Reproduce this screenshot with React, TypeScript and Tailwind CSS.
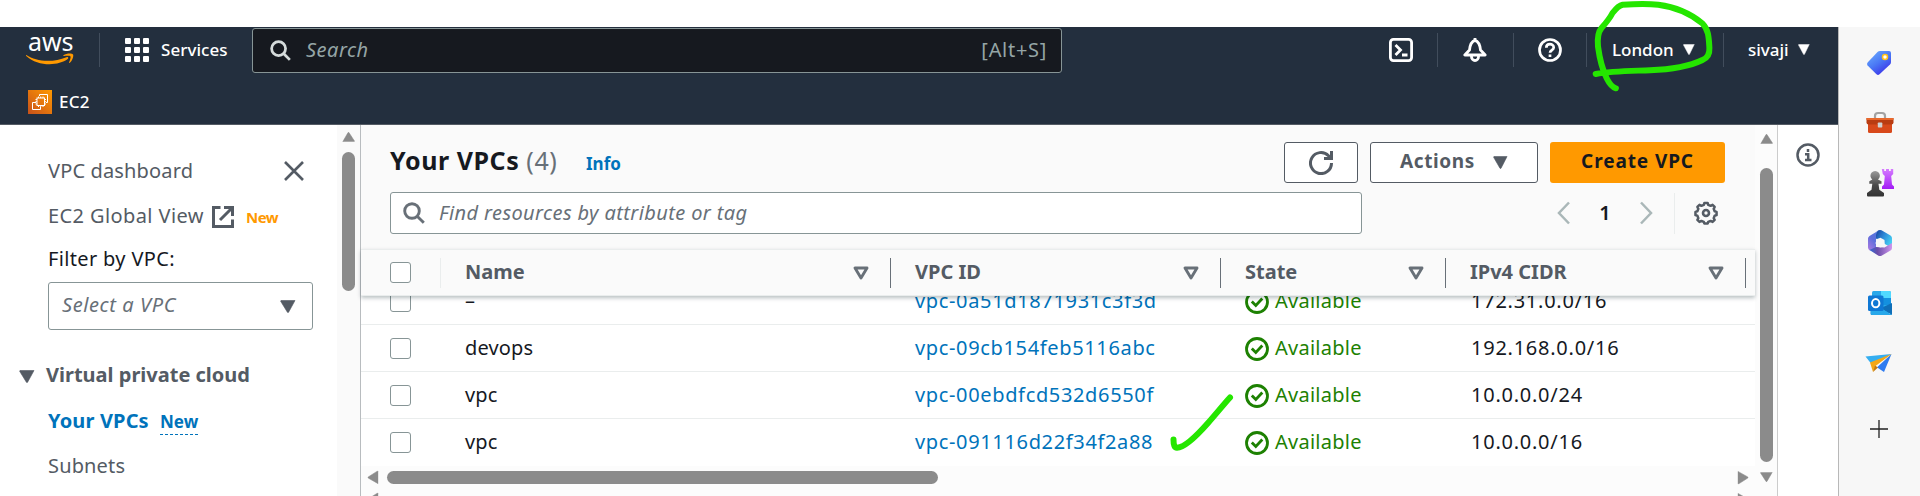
import type { ReactNode } from "react";

type Vpc = { name: string; id: string; cidr: string };

const vpcs: Vpc[] = [
  { name: "–", id: "vpc-0a51d1871931c3f3d", cidr: "172.31.0.0/16" },
  { name: "devops", id: "vpc-09cb154feb5116abc", cidr: "192.168.0.0/16" },
  { name: "vpc", id: "vpc-00ebdfcd532d6550f", cidr: "10.0.0.0/24" },
  { name: "vpc", id: "vpc-091116d22f34f2a88", cidr: "10.0.0.0/16" },
];

const columns = "grid grid-cols-[80px_450px_330px_225px_300px_1fr]";

function Caret({ className }: { className: string }) {
  return (
    <svg viewBox="0 0 16 13" className={className} preserveAspectRatio="none">
      <path d="M1 .5h14L8.600 12.200q-.6.900-1.200 0L.5 1z" fill="currentColor" stroke="currentColor" strokeWidth=".6" strokeLinejoin="round" />
    </svg>
  );
}

function SortCaret() {
  return (
    <svg viewBox="0 0 16 14" className="h-[14px] w-4 shrink-0 text-[#687078]">
      <path d="M2 2h12L8 12z" fill="none" stroke="currentColor" strokeWidth="2.900" strokeLinejoin="round" />
    </svg>
  );
}

function SearchIcon({ className }: { className: string }) {
  return (
    <svg viewBox="0 0 22 22" className={className} fill="none" stroke="currentColor" strokeWidth="2.900">
      <circle cx="9" cy="9" r="7.300" />
      <path d="M14.200 14.200 20.800 20.800" />
    </svg>
  );
}

function Checkbox() {
  return <span className="block h-[21px] w-[21px] rounded-[3px] border border-[#879596] bg-white" />;
}

function Divider({ className = "" }: { className?: string }) {
  return <span className={`block h-[34px] w-px shrink-0 bg-[#414d5c] ${className}`} />;
}

function TopBar() {
  return (
    <header className="h-[98px] border-b border-[#545b64] bg-[#232f3e] text-white">
      <div className="flex h-[47px] items-center pb-0.5">
        <div className="ml-[26px] flex h-[30px] w-12 flex-col">
          <span className="h-[18px] pl-[2px] text-[25px] leading-[13px] tracking-[-0.1px]">aws</span>
          <svg viewBox="0 0 48 12" className="h-3 w-12 shrink-0">
            <path d="M.3 2C10 8.800 27 9.800 40.500 4.200c1.500-.6 2.400.8 1.200 1.800C32 13.200 12 13.600.2 2.900c-.5-.5-.2-1.200.1-.9z" fill="#ff9900" />
            <path d="M37.500 2.200c3-2 8.300-2 9.500-.8 1 1.200-.8 6.400-3.200 8.400-.5.400-1 .1-.7-.5.8-1.900 1.900-4.700 1.400-5.800-.6-.9-4.200-.7-6.500-.4-.7.100-1-.5-.5-.9z" fill="#ff9900" />
          </svg>
        </div>
        <Divider className="ml-[25px]" />
        <svg viewBox="0 0 24 24" className="ml-[25px] h-6 w-6 shrink-0" fill="currentColor">
          {[0, 9, 18].map((y) => [0, 9, 18].map((x) => <rect key={`${x}-${y}`} x={x} y={y} width="6" height="6" rx="1" />))}
        </svg>
        <span className="ml-3 w-[91px] shrink-0 text-[17px] font-medium tracking-[0.05px] whitespace-nowrap">Services</span>
        <div className="mt-0.5 flex h-[45px] w-[810px] shrink-0 items-center rounded-[3px] border border-[#879596] bg-[#16191f] pr-[14px] pl-[17px] text-[20px] text-[#95a5a6]">
          <SearchIcon className="h-[21px] w-[21px] text-[#d5dbdb]" />
          <span className="ml-[15px] flex-1 pb-0.5 tracking-[0.5px] italic">Search</span>
          <span className="pb-0.5 tracking-[0.7px]">[Alt+S]</span>
        </div>
        <svg viewBox="0 0 24 24" className="ml-[327px] h-6 w-6 shrink-0" fill="none" stroke="currentColor" strokeWidth="2.800">
          <rect x="1.400" y="1.400" width="21.200" height="21.200" rx="3" />
          <path d="m6.500 7 5 5-5 5M13 17h5.500" />
        </svg>
        <Divider className="ml-6" />
        <svg viewBox="0 0 24 24" className="ml-[25px] h-6 w-6 shrink-0" fill="none" stroke="currentColor" strokeWidth="2.800" strokeLinejoin="round">
          <path d="M1.800 17h20.400L17.500 12C17 6.500 15 3.200 12 2.300 9 3.200 7 6.500 6.500 12z" />
          <path d="M8.500 17.500v1.200a3.500 3.800 0 0 0 7 0v-1.200M12 0v2.500" />
        </svg>
        <Divider className="ml-[26px]" />
        <svg viewBox="0 0 24 24" className="ml-6 h-6 w-6 shrink-0" fill="none" stroke="currentColor" strokeWidth="2.700">
          <circle cx="12" cy="12" r="10.500" />
          <path d="M8.300 9.700C8.300 5 15.700 5.200 15.700 9.400c0 2.700-3.700 2.600-3.700 5.400M12 16.500v2.600" />
        </svg>
        <Divider className="ml-6" />
        <span className="ml-[25px] w-[71px] shrink-0 text-[17px] font-medium whitespace-nowrap">London</span>
        <Caret className="h-[11px] w-3 shrink-0" />
        <Divider className="ml-[28px]" />
        <span className="ml-6 w-[50px] shrink-0 text-[17px] font-medium whitespace-nowrap">sivaji</span>
        <Caret className="h-[11px] w-3 shrink-0" />
      </div>
      <div className="flex h-[50px] items-center gap-2 pt-[6px] pl-7">
        <svg viewBox="0 0 24 24" className="h-6 w-6">
          <defs>
            <linearGradient id="ec2" x1="0" y1="1" x2="1" y2="0">
              <stop offset="0" stopColor="#c8511b" />
              <stop offset="1" stopColor="#ff9900" />
            </linearGradient>
          </defs>
          <rect width="24" height="24" fill="url(#ec2)" />
          <g fill="none" stroke="#fff" strokeWidth="1">
            <rect x="9" y="8" width="7.500" height="7.500" />
            <path d="M10.500 6.500V8m2.200-1.500V8M15 6.500V8m-4.500 7.500V17m2.200-1.500V17m2.300-1.500V17M7.500 9.500H9m-1.500 2.200H9M7.500 14H9m7.500-4.500H18m-1.500 2.200H18M16.500 14H18" />
            <path d="M11.500 6V4.500h8v8H18M8 12.500H4.500v7h8V17" />
          </g>
        </svg>
        <span className="-ml-px text-[17px] font-medium tracking-[0.2px]">EC2</span>
      </div>
    </header>
  );
}

function SideNav() {
  return (
    <nav className="flex w-[360px] shrink-0 text-[20px] leading-7 text-[#545b64]">
      <div className="w-[337px] pt-8 whitespace-nowrap">
        <div className="flex h-[28px] items-center justify-between pr-[33px] pl-12">
          <span className="tracking-[0.15px]">VPC dashboard</span>
          <svg viewBox="0 0 20 20" className="h-5 w-5" stroke="currentColor" strokeWidth="2.600">
            <path d="m1 1 18 18M19 1 1 19" />
          </svg>
        </div>
        <div className="mt-[17px] flex h-7 items-center pl-12">
          <span className="w-[164px] tracking-[0.4px]">EC2 Global View</span>
          <svg viewBox="0 0 22 22" className="mt-0.5 h-[22px] w-[22px]" fill="none" stroke="currentColor" strokeWidth="3">
            <path d="M8.500 1.500h-7v19h19v-7M12 1.500h8.500V10M20 2 8 14" />
          </svg>
          <span className="mt-0.5 ml-3 text-[15px] font-bold tracking-[-0.5px] text-[#ff9900]">New</span>
        </div>
        <div className="mt-[15px] h-7 pl-12 tracking-[0.35px] text-[#16191f]">Filter by VPC:</div>
        <div className="mt-[9px] ml-12 flex h-12 w-[265px] items-center justify-between rounded-[3px] border border-[#879596] bg-white pr-4 pl-[13px]">
          <span className="pb-0.5 tracking-[0.6px] text-[#687078] italic">Select a VPC</span>
          <Caret className="h-[13px] w-4" />
        </div>
        <div className="mt-[31px] flex h-7 items-center gap-3 pl-[19px] font-bold">
          <Caret className="mt-0.5 h-[13px] w-4" />
          <span className="-ml-px">Virtual private cloud</span>
        </div>
        <div className="mt-[18px] flex h-7 items-center pl-12 font-bold text-[#0073bb]">
          <span className="w-[112px] tracking-[0.15px]">Your VPCs</span>
          <span className="mt-px border-b border-dashed border-[#0073bb] text-[17px] leading-[25px]">New</span>
        </div>
        <div className="mt-[17px] h-7 pl-12 tracking-[0.15px]">Subnets</div>
      </div>
      <div className="flex w-[23px] flex-col bg-[#fafafa] pt-[7px] pl-[5px] text-[#8b8b8b]">
        <Caret className="h-[10px] w-[13px] rotate-180" />
        <span className="mt-[10px] h-[139px] w-[13px] rounded-full bg-[#8b8b8b]" />
      </div>
    </nav>
  );
}

function Button({ className, children }: { className: string; children: ReactNode }) {
  return (
    <button className={`flex h-[41px] shrink-0 items-center justify-center rounded-[3px] text-[19px] font-bold whitespace-nowrap ${className}`}>
      {children}
    </button>
  );
}

function HeaderCell({ label, pad }: { label: string; pad: string }) {
  return (
    <div className={`flex h-[30px] items-center justify-between border-r border-[#687078] ${pad}`}>
      <span className="pb-0.5">{label}</span>
      <SortCaret />
    </div>
  );
}

function VpcTable() {
  return (
    <section className="flex w-[1394px] shrink-0 flex-col bg-[#fafafa]">
      <div className="h-[124px] pl-[29px]">
        <div className="flex h-[67px] items-center pt-[8px]">
          <h1 className="w-[196px] shrink-0 pb-1 text-[25px] font-bold tracking-[0.55px] whitespace-nowrap text-[#16191f]">
            Your VPCs <span className="font-normal text-[#687078]">(4)</span>
          </h1>
          <span className="mt-0.5 w-[698px] shrink-0 text-[17px] font-bold text-[#0073bb]">Info</span>
          <Button className="w-[74px] border border-[#545b64] bg-white text-[#545b64]">
            <svg viewBox="0 0 24 24" className="h-6 w-6" fill="none" stroke="currentColor" strokeWidth="3">
              <path d="M22.500 12A10.500 10.500 0 1 1 19.500 4.700L22 7.500" />
              <path d="M22.500 0v7.500H15" />
            </svg>
          </Button>
          <Button className="ml-3 w-[168px] gap-[18px] border border-[#545b64] bg-white text-[#545b64]">
            <span className="pb-0.5 tracking-[0.6px]">Actions</span>
            <Caret className="h-[13px] w-[15px]" />
          </Button>
          <Button className="ml-3 w-[175px] bg-[#ff9900] text-[#16191f]">
            <span className="pb-0.5 tracking-[0.9px]">Create VPC</span>
          </Button>
        </div>
        <div className="flex h-[42px] items-center">
          <div className="flex h-[42px] w-[972px] shrink-0 items-center rounded-[3px] border border-[#879596] bg-white pl-3 text-[20px] text-[#687078] italic">
            <SearchIcon className="h-[22px] w-[22px]" />
            <span className="ml-[14px] tracking-[0.4px]">Find resources by attribute or tag</span>
          </div>
          <svg viewBox="0 0 13 24" className="ml-[195px] h-6 w-[13px] shrink-0" fill="none" stroke="#aab7b8" strokeWidth="2.500">
            <path d="M12 1.500 2 12l10 10.500" />
          </svg>
          <span className="w-[70px] shrink-0 text-center text-[20px] font-semibold text-[#16191f]">1</span>
          <svg viewBox="0 0 13 24" className="h-6 w-[13px] shrink-0" fill="none" stroke="#aab7b8" strokeWidth="2.500">
            <path d="m1 1.500 10 10.500L1 22.500" />
          </svg>
          <span className="ml-[21px] h-[41px] w-px shrink-0 bg-[#eaeded]" />
          <svg viewBox="0 0 24 24" className="ml-[19px] h-6 w-6 shrink-0" fill="none" stroke="#545b64" strokeWidth="2.600" strokeLinejoin="round">
            <path d="M10.300 1.500h3.400l.6 2 2.500 1 2-1 2.200 2.200-1 2 1 2.500 2 .6v3.400l-2 .6-1 2.500 1 1.800-2.200 2.200-2-1-2.500 1-.6 1.700h-3.400l-.6-1.700-2.500-1-2 1-2.200-2.200 1-1.800-1-2.500-2-.6v-3.400l2-.6 1-2.500-1-2 2.200-2.200 2 1 2.500-1z" transform="translate(.5 .5) scale(.96)" />
            <circle cx="12" cy="12" r="3" />
          </svg>
        </div>
      </div>
      <div className={`${columns} relative z-10 h-[47px] shrink-0 items-center border-y border-[#eaeded] bg-[#fafafa] text-[20px] font-bold text-[#545b64] shadow-[0_2px_4px_rgba(0,28,36,0.28)]`}>
        <div className="flex h-[30px] items-center border-r border-[#eaeded] pl-[29px]">
          <Checkbox />
        </div>
        <HeaderCell label="Name" pad="pl-6 pr-[21px]" />
        <HeaderCell label="VPC ID" pad="pl-6 pr-[21px]" />
        <HeaderCell label="State" pad="pl-6 pr-[21px]" />
        <HeaderCell label="IPv4 CIDR" pad="pl-6 pr-[21px]" />
      </div>
      <div className="h-[170px] shrink-0 overflow-hidden bg-white text-[20px] text-[#16191f]">
        <div className="-mt-[18px]">
          {vpcs.map((vpc) => (
            <div key={vpc.id} className={`${columns} h-[47px] items-center border-b border-[#eaeded] last:border-transparent`}>
              <div className="pl-[29px]">
                <Checkbox />
              </div>
              <span className="pl-6 tracking-[0.15px]">{vpc.name}</span>
              <span className="pl-6 tracking-[0.65px] text-[#0073bb]">{vpc.id}</span>
              <span className="flex items-center gap-[6px] pl-6 text-[#1d8102]">
                <svg viewBox="0 0 24 24" className="mt-px h-6 w-6" fill="none" stroke="currentColor" strokeWidth="2.800">
                  <circle cx="12" cy="12" r="10.500" />
                  <path d="m6.800 11.500 4 4 6.500-7" />
                </svg>
                <span className="tracking-[0.25px]">Available</span>
              </span>
              <span className="pl-[25px] tracking-[0.75px]">{vpc.cidr}</span>
            </div>
          ))}
        </div>
      </div>
      <div className="flex h-[23px] shrink-0 items-center bg-[#fcfcfc] px-[5px] text-[#8b8b8b]">
        <Caret className="h-[11px] w-[14px] rotate-90" />
        <span className="ml-[7px] h-[13px] w-[551px] rounded-full bg-[#8b8b8b]" />
        <Caret className="ml-auto h-[11px] w-[14px] -rotate-90" />
      </div>
      <div className="flex h-[7px] shrink-0 justify-between overflow-hidden bg-[#fcfcfc] px-[5px] pt-[5px] text-[#8b8b8b]">
        <Caret className="h-[11px] w-[14px] shrink-0 rotate-90" />
        <Caret className="h-[11px] w-[14px] shrink-0 -rotate-90" />
      </div>
    </section>
  );
}

function EdgeSidebar() {
  return (
    <aside className="flex h-[469px] w-[82px] shrink-0 flex-col items-center border-l border-[#b8b8b8] bg-[#f7f7f7] pt-[22px]">
      <svg viewBox="0 0 28 28" className="mr-0.5 h-7 w-7">
        <defs>
          <linearGradient id="tag" x1="0" y1="0" x2=".7" y2="1">
            <stop offset="0" stopColor="#6fb1ff" />
            <stop offset=".55" stopColor="#4a78f5" />
            <stop offset="1" stopColor="#3b2fe8" />
          </linearGradient>
        </defs>
        <path d="M15 2h9q2 0 2 2v9q0 1.500-1 2.500L14.500 25.300q-1.500 1.200-3 0L2.600 16.600q-1.200-1.500 0-3L12.500 3q1-1 2.500-1z" fill="url(#tag)" />
        <circle cx="20" cy="8" r="2.500" fill="#fff" stroke="#ffc21a" strokeWidth="1.500" />
      </svg>
      <svg viewBox="0 0 28 24" className="mt-[34px] h-6 w-7">
        <path d="M9 8V5q0-3 3-3h4q3 0 3 3v3" fill="none" stroke="#a3a3a3" strokeWidth="2.200" />
        <rect x="2" y="8" width="24" height="14" rx="1.500" fill="#d8491b" />
        <path d="M.5 7h27v4.500q0 2-2 2h-23q-2 0-2-2z" fill="#b93c12" />
        <path d="M.5 7h27v2H.5z" fill="#e8682c" />
        <rect x="11.800" y="11.500" width="4.500" height="5" rx=".8" fill="#d0d0d0" />
      </svg>
      <svg viewBox="0 0 28 28" className="mt-[34px] h-7 w-7">
        <defs>
          <linearGradient id="pawn" x1="0" y1="0" x2="0" y2="1">
            <stop offset="0" stopColor="#9a9a9a" />
            <stop offset=".55" stopColor="#4a4a4a" />
            <stop offset="1" stopColor="#333" />
          </linearGradient>
          <linearGradient id="rook" x1="0" y1="0" x2="0" y2="1">
            <stop offset="0" stopColor="#d67cff" />
            <stop offset="1" stopColor="#a21cf5" />
          </linearGradient>
        </defs>
        <path d="M15.800 0h2.400v2h1.800V0h3v2h1.800V0h2.400v5l-2 2 .8 8.500 2 2V20h-12v-2.500l2-2 .8-8.500-2-2z" fill="url(#rook)" />
        <path d="M6.300 10.500A4.700 4.700 0 1 1 12 10.500l3.500 1.800v2.400h-3l.8 6 4.700 3.300v2.500q0 1-1 1H2q-1 0-1-1V24l4.500-3.300.8-6h-3v-2.400z" fill="url(#pawn)" />
      </svg>
      <svg viewBox="0 0 26 28" className="mt-[32px] h-7 w-[26px]">
        <defs>
          <linearGradient id="mTop" x1="0" y1="0" x2="1" y2=".6">
            <stop offset="0" stopColor="#173f9c" />
            <stop offset=".5" stopColor="#2d8ad8" />
            <stop offset="1" stopColor="#45cff2" />
          </linearGradient>
          <linearGradient id="mLeft" x1="0" y1="1" x2=".6" y2="0">
            <stop offset="0" stopColor="#b07ae2" />
            <stop offset=".6" stopColor="#5f6fdc" />
            <stop offset="1" stopColor="#5577dd" />
          </linearGradient>
          <linearGradient id="mBottom" x1="0" y1="0" x2="1" y2="0">
            <stop offset="0" stopColor="#2f6ad6" />
            <stop offset=".35" stopColor="#6a4da8" />
            <stop offset="1" stopColor="#cf95ee" />
          </linearGradient>
        </defs>
        <path d="M11.500 1.300q1.500-.8 3 0l9 5.200q1.500 1 1.500 2.500v10L16 14l-7-4.500V4q1-2 2.500-2.700z" fill="url(#mTop)" />
        <path d="M12 1.200Q9 3 9 6v13l-6 2.500Q1 20.500 1 18.500V9.500Q1 8 2.500 7z" fill="url(#mLeft)" />
        <path d="M2.500 21 9 18l8.500.5L25 14v5q0 1.500-1.500 2.500l-9 5.200q-1.500.8-3 0z" fill="url(#mBottom)" />
        <path d="m10 10 3.500-1.200L17.500 11l.3 4.500-3.800 3-4-.8L8.500 14z" fill="#f7f7f7" />
      </svg>
      <svg viewBox="0 0 26 26" className="mt-[33px] h-[26px] w-[26px]">
        <rect x="5" y="1" width="19" height="22" rx="1.500" fill="#28a8ea" />
        <path d="M14 1h8.500q1.500 0 1.500 1.500V8H14z" fill="#50d9ff" />
        <path d="M14 8h10v7H14z" fill="#1490df" />
        <path d="M3.500 15 25 25H5q-1.500 0-1.500-1.500z" fill="#1490df" />
        <path d="M25 13v12L14 18z" fill="#0f6fb8" />
        <path d="M4 20v3.500Q4 25 5.500 25H25l-10-6z" fill="#28a8ea" />
        <rect x="1" y="5.500" width="15.500" height="15.500" rx="1.500" fill="#0f78d4" />
        <ellipse cx="8.700" cy="13.200" rx="3.700" ry="4.100" fill="none" stroke="#fff" strokeWidth="2" />
      </svg>
      <svg viewBox="0 0 28 20" className="mt-[37px] mr-0.5 h-5 w-7">
        <path d="M.5 3.500 26.500 1 8 13z" fill="#35aef0" />
        <path d="M26.500 1 19 19l-7.500-5L8 18z" fill="#2f7cf0" />
        <path d="M26.500 1 5 9.500 8 19l2.500-6z" fill="#f5a714" />
        <path d="M8 19l2-6.500 3 2z" fill="#c77a0a" />
      </svg>
      <svg viewBox="0 0 18 18" className="mt-[47px] mr-[2px] h-[18px] w-[18px]" stroke="#222" strokeWidth="1.300">
        <path d="M9 0v18M0 9h18" />
      </svg>
    </aside>
  );
}

export default function App() {
  return (
    <div className="relative h-[496px] w-[1920px] overflow-hidden bg-white pt-[27px] font-['Noto_Sans',sans-serif]">
      <div className="flex">
        <div className="w-[1838px] shrink-0">
          <TopBar />
          <main className="flex h-[371px]">
            <SideNav />
            <div className="w-px shrink-0 bg-[#b8bcbf]" />
            <VpcTable />
            <div className="flex w-[23px] shrink-0 flex-col border-r border-[#ccc] bg-[#fcfcfc] pt-[9px] pl-[5px] text-[#8b8b8b]">
              <Caret className="h-[10px] w-[13px] rotate-180" />
              <span className="mt-6 h-[294px] w-[13px] rounded-full bg-[#8b8b8b]" />
              <Caret className="mt-[10px] h-[10px] w-[13px]" />
            </div>
            <div className="pt-[18px] pl-[18px]">
              <svg viewBox="0 0 24 24" className="h-6 w-6" fill="none" stroke="#545b64" strokeWidth="2.500">
                <circle cx="12" cy="12" r="10.500" />
                <path d="M12 6v3M9 11.300h3.200v5.500M9 17h6.500" />
              </svg>
            </div>
          </main>
        </div>
        <EdgeSidebar />
      </div>
      <svg viewBox="0 0 1920 496" className="pointer-events-none absolute inset-0 z-20 h-[496px] w-[1920px]" fill="none" stroke="#25e600" strokeWidth="6" strokeLinecap="round" strokeLinejoin="round">
        <path d="M1615.900 88.300Q1611 87 1606.800 78.500C1601.500 68 1599.400 57 1598 46.500C1597.300 39 1597.300 33 1601.500 28C1606.800 22 1610 18 1612.500 13Q1618.300 5.500 1622.600 4.700C1635.200 4 1646.800 3.500 1658.300 4.800C1675.200 7 1691 14 1702.500 23.500C1708.800 30 1708.800 38 1709.400 48Q1709.900 57 1702.500 60C1687.800 67 1671 69.500 1650 70.200C1631 71 1612 71 1595.700 74" />
        <path d="M1173.500 439.500Q1173.500 448 1177 447.800C1184 447.500 1197 435.500 1208 423C1216 414 1224 404 1230 397.500" />
      </svg>
    </div>
  );
}
